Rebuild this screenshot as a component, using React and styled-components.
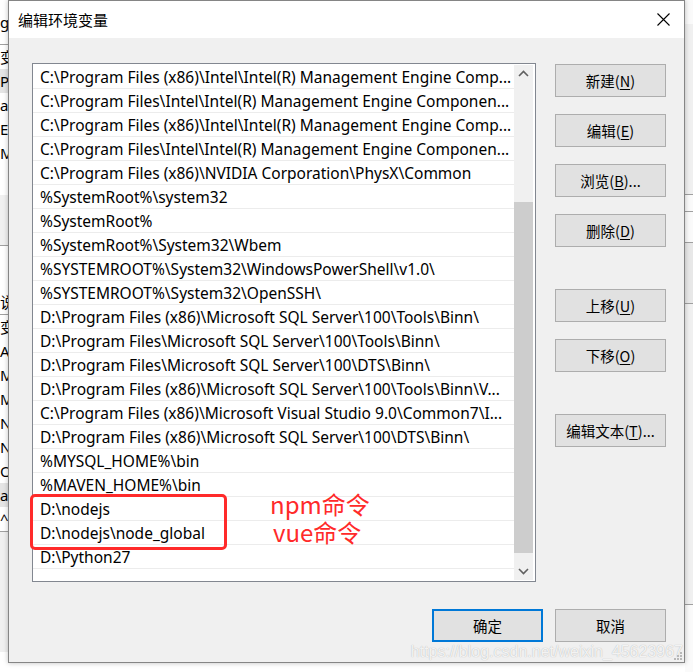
import styled, { createGlobalStyle } from "styled-components";

const GlobalStyle = createGlobalStyle`
  html, body {
    margin: 0;
    padding: 0;
    background: #fff;
  }
  body {
    font-family: "Segoe UI", "Noto Sans", "Noto Sans CJK SC", sans-serif;
  }
`;

const Page = styled.div`
  display: flex;
  width: 693px;
  height: 672px;
  overflow: hidden;
`;

const BackStrip = styled.div`
  width: ${(p) => p.$w}px;
  flex-shrink: 0;
  display: flex;
  flex-direction: column;
  background: ${(p) => p.$bg};
  overflow: hidden;
`;

const BackRow = styled.div`
  height: ${(p) => p.$h}px;
  flex-shrink: 0;
  background: ${(p) => p.$bg || "transparent"};
  border-bottom: ${(p) => (p.$line ? "1px solid #a0a0a0" : "none")};
  font-size: 15px;
  line-height: ${(p) => p.$h}px;
  white-space: nowrap;
  color: #000;
  font-family: "Noto Sans", "Noto Sans CJK SC", sans-serif;
`;

const Dialog = styled.div`
  width: 677px;
  height: 663px;
  box-sizing: border-box;
  flex-shrink: 0;
  border: 1px solid #858585;
  background: #f0f0f0;
  display: flex;
  flex-direction: column;
  position: relative;
  box-shadow: 0 0 5px rgba(0, 0, 0, 0.25);
`;

const TitleBar = styled.div`
  height: 37px;
  flex-shrink: 0;
  background: #fff;
  display: flex;
  align-items: center;
  justify-content: space-between;
  padding: 0 14px 0 9px;
`;

const Title = styled.div`
  font-family: "Noto Sans CJK SC", sans-serif;
  font-size: 15px;
  color: #000;
`;

const Body = styled.div`
  flex: 1;
  display: flex;
  flex-direction: column;
  padding: 25px 18px 20px 23px;
`;

const Main = styled.div`
  display: flex;
  gap: 19px;
`;

const ListBox = styled.div`
  position: relative;
  width: 504px;
  height: 519px;
  box-sizing: border-box;
  border: 1px solid #828790;
  background: #fff;
  display: flex;
  padding: 1px 2px 1px 0;
`;

const Rows = styled.div`
  width: 481px;
  overflow: hidden;
`;

const Row = styled.div`
  height: 23px;
  border-bottom: 1px solid #ececec;
  padding-left: 7px;
  font-family: "Segoe UI", "Noto Sans", sans-serif;
  font-size: 15.5px;
  line-height: 24px;
  color: #000;
  white-space: nowrap;
  overflow: hidden;
`;

const ScrollBar = styled.div`
  width: 19px;
  background: #f0f0f0;
  display: flex;
  flex-direction: column;
`;

const ArrowBtn = styled.div`
  height: 17px;
  display: flex;
  align-items: center;
  justify-content: center;
`;

const Track = styled.div`
  flex: 1;
  padding-top: 120px;
`;

const Thumb = styled.div`
  height: 351px;
  background: #cdcdcd;
`;

const Side = styled.div`
  display: flex;
  flex-direction: column;
  padding-top: 1px;
`;

const Btn = styled.div`
  width: 111px;
  height: 33px;
  box-sizing: border-box;
  margin-top: ${(p) => p.$mt || 0}px;
  border: ${(p) => (p.$primary ? "2px solid #0078d7" : "1px solid #adadad")};
  background: #e1e1e1;
  display: flex;
  align-items: center;
  justify-content: center;
  font-family: "Noto Sans CJK SC", sans-serif;
  font-size: 14.5px;
  color: #000;
  u {
    text-decoration: underline;
    text-underline-offset: 2px;
  }
`;

const Footer = styled.div`
  margin-top: 27px;
  display: flex;
  justify-content: flex-end;
  gap: 12px;
`;

const Mark = styled.div`
  position: absolute;
  left: -3px;
  top: 430px;
  width: 197px;
  height: 56px;
  box-sizing: border-box;
  border: 3px solid #ff2a2a;
  border-radius: 5px;
`;

const Note = styled.div`
  position: absolute;
  left: ${(p) => p.$x}px;
  top: ${(p) => p.$y}px;
  font-family: "Noto Sans CJK SC", sans-serif;
  font-size: 24px;
  line-height: 26px;
  color: #ff2a2a;
  white-space: nowrap;
`;

const Watermark = styled.div`
  position: absolute;
  right: 1px;
  bottom: 1px;
  font-family: "Liberation Sans", Arial, sans-serif;
  font-size: 16px;
  color: rgba(255, 255, 255, 0.85);
  text-shadow: 0 0 1px rgba(0, 0, 0, 0.3);
  white-space: nowrap;
`;

const Grip = styled.svg`
  position: absolute;
  right: 1px;
  bottom: 1px;
`;

const paths = [
  "C:\\Program Files (x86)\\Intel\\Intel(R) Management Engine Comp...",
  "C:\\Program Files\\Intel\\Intel(R) Management Engine Componen...",
  "C:\\Program Files (x86)\\Intel\\Intel(R) Management Engine Comp...",
  "C:\\Program Files\\Intel\\Intel(R) Management Engine Componen...",
  "C:\\Program Files (x86)\\NVIDIA Corporation\\PhysX\\Common",
  "%SystemRoot%\\system32",
  "%SystemRoot%",
  "%SystemRoot%\\System32\\Wbem",
  "%SYSTEMROOT%\\System32\\WindowsPowerShell\\v1.0\\",
  "%SYSTEMROOT%\\System32\\OpenSSH\\",
  "D:\\Program Files (x86)\\Microsoft SQL Server\\100\\Tools\\Binn\\",
  "D:\\Program Files\\Microsoft SQL Server\\100\\Tools\\Binn\\",
  "D:\\Program Files\\Microsoft SQL Server\\100\\DTS\\Binn\\",
  "D:\\Program Files (x86)\\Microsoft SQL Server\\100\\Tools\\Binn\\V...",
  "C:\\Program Files (x86)\\Microsoft Visual Studio 9.0\\Common7\\I...",
  "D:\\Program Files (x86)\\Microsoft SQL Server\\100\\DTS\\Binn\\",
  "%MYSQL_HOME%\\bin",
  "%MAVEN_HOME%\\bin",
  "D:\\nodejs",
  "D:\\nodejs\\node_global",
  "D:\\Python27",
  "",
];

const leftBack = [
  { h: 44, t: "g(", line: true },
  { h: 24, t: "变" },
  { h: 24, t: "Pr", bg: "#e5e5e5" },
  { h: 24, t: "a" },
  { h: 24, t: "E" },
  { h: 24, t: "M" },
  { h: 30, t: "" },
  { h: 50, t: "", bg: "#f0f0f0", line: true },
  { h: 44, t: "" },
  { h: 24, t: "说", line: true },
  { h: 24, t: "变" },
  { h: 24, t: "A" },
  { h: 24, t: "M" },
  { h: 24, t: "M" },
  { h: 24, t: "NO" },
  { h: 24, t: "NU" },
  { h: 24, t: "OS" },
  { h: 24, t: "a", bg: "#e5e5e5" },
  { h: 24, t: "^", line: true },
  { h: 120, t: "", bg: "#f0f0f0" },
];

const rightBack = [
  { h: 24, t: "" },
  { h: 170, t: "", bg: "#f0f0f0", line: true },
  { h: 16, t: "", line: true },
  { h: 30, t: "", line: true },
  { h: 60, t: "", bg: "#e8e8e8", line: true },
  { h: 300, t: "", bg: "#f0f0f0", line: true },
  { h: 100, t: "" },
];

function Chevron({ up }) {
  return (
    <svg width="11" height="7" viewBox="0 0 11 7">
      <path
        d={up ? "M1 6 L5.5 1.5 L10 6" : "M1 1 L5.5 5.5 L10 1"}
        fill="none"
        stroke="#606060"
        strokeWidth="1.6"
      />
    </svg>
  );
}

function Back({ w, bg, rows }) {
  return (
    <BackStrip $w={w} $bg={bg}>
      {rows.map((r, i) => (
        <BackRow key={i} $h={r.h} $bg={r.bg} $line={r.line}>
          {r.t}
        </BackRow>
      ))}
    </BackStrip>
  );
}

export default function App() {
  return (
    <Page>
      <GlobalStyle />
      <Back w={8} bg="#fff" rows={leftBack} />
      <Dialog>
        <TitleBar>
          <Title>编辑环境变量</Title>
          <svg width="13" height="13" viewBox="0 0 13 13">
            <path d="M0.5 0.5 L12.5 12.5 M12.5 0.5 L0.5 12.5" stroke="#000" strokeWidth="1.1" />
          </svg>
        </TitleBar>
        <Body>
          <Main>
            <ListBox>
              <Rows>
                {paths.map((p, i) => (
                  <Row key={i}>{p}</Row>
                ))}
              </Rows>
              <ScrollBar>
                <ArrowBtn>
                  <Chevron up />
                </ArrowBtn>
                <Track>
                  <Thumb />
                </Track>
                <ArrowBtn>
                  <Chevron />
                </ArrowBtn>
              </ScrollBar>
              <Mark />
              <Note $x={237} $y={427}>npm命令</Note>
              <Note $x={240} $y={455}>vue命令</Note>
            </ListBox>
            <Side>
              <Btn>新建(<u>N</u>)</Btn>
              <Btn $mt={17}>编辑(<u>E</u>)</Btn>
              <Btn $mt={17}>浏览(<u>B</u>)...</Btn>
              <Btn $mt={17}>删除(<u>D</u>)</Btn>
              <Btn $mt={42}>上移(<u>U</u>)</Btn>
              <Btn $mt={17}>下移(<u>O</u>)</Btn>
              <Btn $mt={42}>编辑文本(<u>T</u>)...</Btn>
            </Side>
          </Main>
          <Footer>
            <Btn $primary>确定</Btn>
            <Btn>取消</Btn>
          </Footer>
        </Body>
        <Watermark>https://blog.csdn.net/weixin_45623967</Watermark>
        <Grip width="10" height="10" viewBox="0 0 10 10">
          <rect x="7" y="1" width="2" height="2" fill="#b8b8b8" />
          <rect x="4" y="4" width="2" height="2" fill="#b8b8b8" />
          <rect x="7" y="4" width="2" height="2" fill="#b8b8b8" />
          <rect x="1" y="7" width="2" height="2" fill="#b8b8b8" />
          <rect x="4" y="7" width="2" height="2" fill="#b8b8b8" />
          <rect x="7" y="7" width="2" height="2" fill="#b8b8b8" />
        </Grip>
      </Dialog>
      <Back w={8} bg="#fafafa" rows={rightBack} />
    </Page>
  );
}
